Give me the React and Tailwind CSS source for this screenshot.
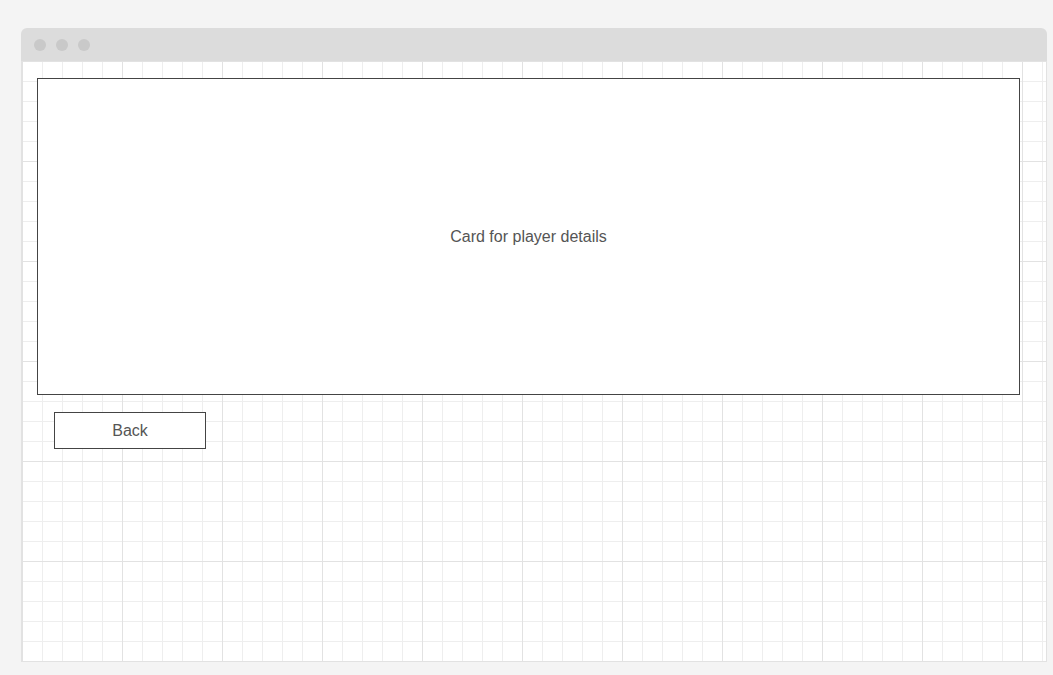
export default function App() {
  return (
    <div className="min-h-[675px] w-full bg-[#f4f4f4] pt-[28px] pl-[21px] font-['Liberation_Sans',Arial,sans-serif]">
      <div className="w-[1026px]">
        <div className="flex h-[33px] items-center gap-[10px] rounded-t-[6px] bg-[#dcdcdc] pl-[13px]">
          <span className="h-3 w-3 rounded-full bg-[#c9c9c9]" />
          <span className="h-3 w-3 rounded-full bg-[#c9c9c9]" />
          <span className="h-3 w-3 rounded-full bg-[#c9c9c9]" />
        </div>
        <div className="h-[601px] border-x border-b border-[#e2e2e2] bg-white pt-[17px] pl-[15px] pr-[26px] [background-image:linear-gradient(to_right,#e2e2e2_1px,transparent_1px),linear-gradient(to_bottom,#e2e2e2_1px,transparent_1px),linear-gradient(to_right,#eeeeee_1px,transparent_1px),linear-gradient(to_bottom,#eeeeee_1px,transparent_1px)] [background-size:100px_100px,100px_100px,20px_20px,20px_20px]">
          <div className="flex h-[317px] w-[983px] items-center justify-center border border-[#444444] bg-white pt-[1px] text-[16px] text-[#555555]">
            Card for player details
          </div>
          <button className="mt-[17px] ml-[17px] flex h-[37px] w-[152px] items-center justify-center border border-[#444444] bg-white text-[16px] text-[#555555]">
            Back
          </button>
        </div>
      </div>
    </div>
  );
}
